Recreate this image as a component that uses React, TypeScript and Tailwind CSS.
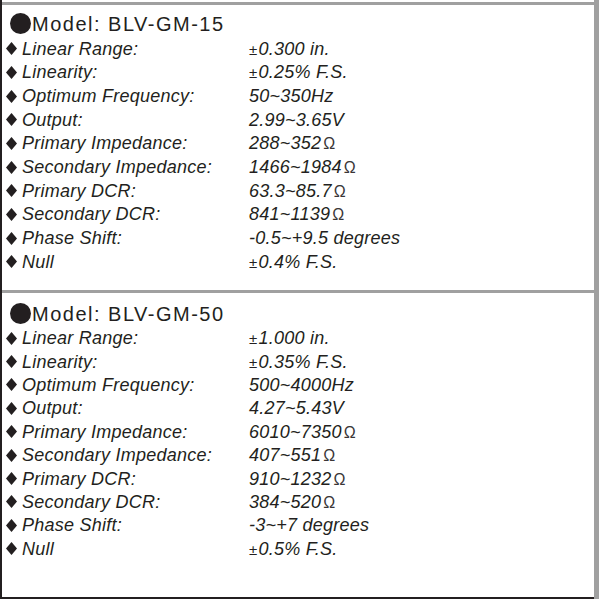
const ink = "text-[#231f20]";

interface Spec {
  label: string;
  value: string;
  pm?: boolean;
  ohm?: boolean;
}

const gm15: Spec[] = [
  { label: "Linear Range:", value: "0.300 in.", pm: true },
  { label: "Linearity:", value: "0.25% F.S.", pm: true },
  { label: "Optimum Frequency:", value: "50~350Hz" },
  { label: "Output:", value: "2.99~3.65V" },
  { label: "Primary Impedance:", value: "288~352", ohm: true },
  { label: "Secondary Impedance:", value: "1466~1984", ohm: true },
  { label: "Primary DCR:", value: "63.3~85.7", ohm: true },
  { label: "Secondary DCR:", value: "841~1139", ohm: true },
  { label: "Phase Shift:", value: "-0.5~+9.5 degrees" },
  { label: "Null", value: "0.4% F.S.", pm: true },
];

const gm50: Spec[] = [
  { label: "Linear Range:", value: "1.000 in.", pm: true },
  { label: "Linearity:", value: "0.35% F.S.", pm: true },
  { label: "Optimum Frequency:", value: "500~4000Hz" },
  { label: "Output:", value: "4.27~5.43V" },
  { label: "Primary Impedance:", value: "6010~7350", ohm: true },
  { label: "Secondary Impedance:", value: "407~551", ohm: true },
  { label: "Primary DCR:", value: "910~1232", ohm: true },
  { label: "Secondary DCR:", value: "384~520", ohm: true },
  { label: "Phase Shift:", value: "-3~+7 degrees" },
  { label: "Null", value: "0.5% F.S.", pm: true },
];

function Diamond() {
  return (
    <svg width="11" height="13" viewBox="0 0 11 13" className="shrink-0">
      <polygon points="5.5,0 11,6.5 5.5,13 0,6.5" fill="#231f20" />
    </svg>
  );
}

function Row({ spec, tall }: { spec: Spec; tall: boolean }) {
  return (
    <div className={`flex items-center pl-[4px] ${tall ? "h-[23.67px]" : "h-[23.4px]"}`}>
      <Diamond />
      <span className="ml-[5px] w-[227px] shrink-0 italic text-[18px] tracking-[0.25px] leading-none">
        {spec.label}
      </span>
      <span className="italic text-[18px] tracking-[0.25px] leading-none whitespace-nowrap">
        {spec.pm && <span className="not-italic text-[15px] mr-[1px]">±</span>}
        {spec.value}
        {spec.ohm && <span className="not-italic font-light text-[16px] ml-[2px] text-[#3a3637]">Ω</span>}
      </span>
    </div>
  );
}

function ModelBlock({ name, specs, tall, shift }: { name: string; specs: Spec[]; tall: boolean; shift: boolean }) {
  return (
    <div className={shift ? "pt-[1.5px]" : ""}>
      <div className="flex items-center pl-[8px] pt-[7px] h-[32px]">
        <div className="w-[21px] h-[21px] rounded-full bg-[#231f20] -mt-[2px]" />
        <span className="ml-[1px] text-[20px] tracking-[1.5px] leading-[25px]">Model: {name}</span>
      </div>
      {specs.map((s) => (
        <Row key={s.label} spec={s} tall={tall} />
      ))}
    </div>
  );
}

export default function App() {
  return (
    <div
      className={`flex w-[599px] h-[599px] bg-white ${ink}`}
      style={{ fontFamily: '"Liberation Sans", Arial, sans-serif' }}
    >
      <div className="w-[594px] h-[599px] border-l-2 border-b-2 border-[#231f20] pt-[2px] flex flex-col">
        <div className="h-[288px] border-t-[3px] border-[#a0a0a0]">
          <ModelBlock name="BLV-GM-15" specs={gm15} tall shift={false} />
        </div>
        <div className="flex-1 border-t-[3px] border-[#a0a0a0]">
          <ModelBlock name="BLV-GM-50" specs={gm50} tall={false} shift />
        </div>
      </div>
      <div className="w-[5px] h-[599px] bg-[#a0a0a0]" />
    </div>
  );
}
